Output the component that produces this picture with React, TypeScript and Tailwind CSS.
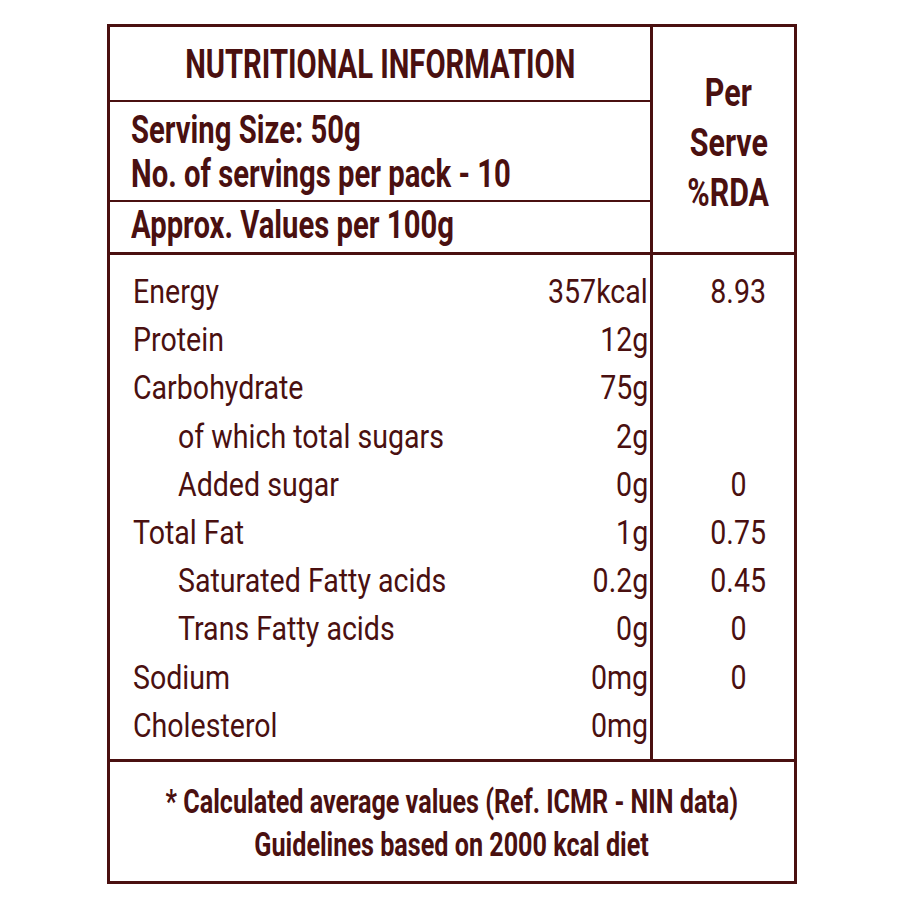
const rows: { name: string; value: string; rda: string; indent?: boolean }[] = [
  { name: 'Energy', value: '357kcal', rda: '8.93' },
  { name: 'Protein', value: '12g', rda: '' },
  { name: 'Carbohydrate', value: '75g', rda: '' },
  { name: 'of which total sugars', value: '2g', rda: '', indent: true },
  { name: 'Added sugar', value: '0g', rda: '0', indent: true },
  { name: 'Total Fat', value: '1g', rda: '0.75' },
  { name: 'Saturated Fatty acids', value: '0.2g', rda: '0.45', indent: true },
  { name: 'Trans Fatty acids', value: '0g', rda: '0', indent: true },
  { name: 'Sodium', value: '0mg', rda: '0' },
  { name: 'Cholesterol', value: '0mg', rda: '' },
];

export default function App() {
  return (
    <div className="min-h-screen bg-white pt-[24px] pl-[107px] font-[Roboto,sans-serif] text-[#4a1010]">
      <div className="w-[690px] border-[3px] border-[#4a1010]">
        {/* header */}
        <div className="flex border-b-[3px] border-[#4a1010]">
          <div className="w-[543px] border-r-[3px] border-[#4a1010] flex flex-col font-bold">
            <div className="h-[75px] border-b-2 border-[#4a1010] pt-[17px] flex justify-center whitespace-nowrap text-[40px] leading-[42px]">
              <span className="inline-block scale-x-[0.73] origin-center">NUTRITIONAL INFORMATION</span>
            </div>
            <div className="h-[100px] border-b-2 border-[#4a1010] pt-[6px] pl-[21px] flex flex-col items-start whitespace-nowrap text-[38px] leading-[44px]">
              <span className="inline-block scale-x-[0.77] origin-left">Serving Size: 50g</span>
              <span className="inline-block scale-x-[0.77] origin-left">No. of servings per pack - 10</span>
            </div>
            <div className="h-[50px] pt-[1px] pl-[21px] flex whitespace-nowrap text-[38px] leading-[44px]">
              <span className="inline-block scale-x-[0.77] origin-left">Approx. Values per 100g</span>
            </div>
          </div>
          <div className="flex-1 pt-[41px] pl-[10px] flex flex-col items-center font-bold text-[38px] leading-[50px]">
            <span className="inline-block scale-x-[0.8] origin-center">Per</span>
            <span className="inline-block scale-x-[0.8] origin-center">Serve</span>
            <span className="inline-block scale-x-[0.8] origin-center">%RDA</span>
          </div>
        </div>

        {/* values */}
        <div className="flex h-[507px] border-b-[3px] border-[#4a1010] text-[34px] leading-[48.2px]">
          <div className="w-[543px] border-r-[3px] border-[#4a1010] pt-[12px] pl-[23px] pr-[2px] flex flex-col">
            {rows.map((r) => (
              <div key={r.name} className="flex justify-between whitespace-nowrap">
                <span className={`inline-block scale-x-[0.84] origin-left ${r.indent ? 'ml-[45px]' : ''}`}>{r.name}</span>
                <span className="inline-block scale-x-[0.84] origin-right">{r.value}</span>
              </div>
            ))}
          </div>
          <div className="flex-1 pt-[12px] pl-[30px] flex flex-col items-center">
            {rows.map((r) => (
              <div key={r.name} className="h-[48.2px] flex justify-center whitespace-nowrap">
                <span className="inline-block scale-x-[0.84] origin-center">{r.rda}</span>
              </div>
            ))}
          </div>
        </div>

        {/* footnote */}
        <div className="h-[119px] pt-[18px] flex flex-col items-center whitespace-nowrap font-bold text-[34px] leading-[43px]">
          <span className="inline-block scale-x-[0.74] origin-center">* Calculated average values (Ref. ICMR - NIN data)</span>
          <span className="inline-block scale-x-[0.74] origin-center">Guidelines based on 2000 kcal diet</span>
        </div>
      </div>
    </div>
  );
}
